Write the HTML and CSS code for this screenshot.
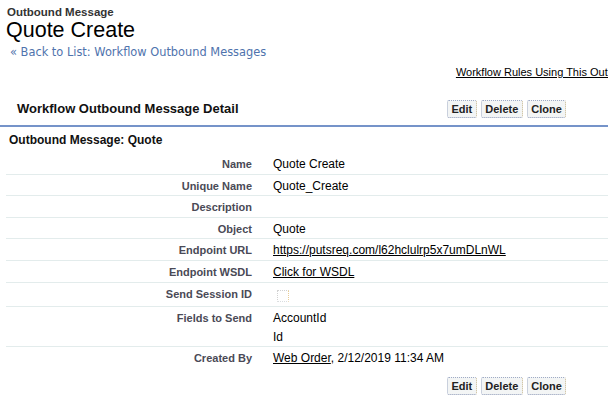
FILE: index.html
```html
<!DOCTYPE html>
<html>
<head>
<meta charset="utf-8">
<link rel="stylesheet" href="styles.css">
</head>
<body>
<div class="page">
  <div class="pt-type">Outbound Message</div>
  <h1 class="pt-title">Quote Create</h1>
  <div class="back"><a href="#">« Back to List: Workflow Outbound Messages</a></div>
  <div class="related"><a href="#">Workflow Rules Using This Outbound Message</a></div>

  <div class="pb-header">
    <h2 class="pb-title">Workflow Outbound Message Detail</h2>
    <div class="pb-buttons">
      <button class="btn">Edit</button>
      <button class="btn">Delete</button>
      <button class="btn">Clone</button>
    </div>
  </div>
  <div class="pb-rule"></div>

  <h3 class="sub-title">Outbound Message: Quote</h3>

  <div class="detail">
    <div class="row"><div class="label">Name</div><div class="value">Quote Create</div></div>
    <div class="row"><div class="label">Unique Name</div><div class="value">Quote_Create</div></div>
    <div class="row"><div class="label">Description</div><div class="value"></div></div>
    <div class="row"><div class="label">Object</div><div class="value">Quote</div></div>
    <div class="row"><div class="label">Endpoint URL</div><div class="value"><a href="#">https://putsreq.com/l62hclulrp5x7umDLnWL</a></div></div>
    <div class="row"><div class="label">Endpoint WSDL</div><div class="value"><a href="#">Click for WSDL</a></div></div>
    <div class="row row-check"><div class="label">Send Session ID</div><div class="value"><span class="checkbox"></span></div></div>
    <div class="row"><div class="label">Fields to Send</div><div class="value"><div>AccountId</div><div class="second">Id</div></div></div>
    <div class="row last"><div class="label">Created By</div><div class="value"><a href="#">Web Order</a>, 2/12/2019 11:34 AM</div></div>
  </div>

  <div class="pb-footer">
    <div class="pb-title-spacer"></div>
    <div class="pb-buttons">
      <button class="btn">Edit</button>
      <button class="btn">Delete</button>
      <button class="btn">Clone</button>
    </div>
  </div>
</div>
</body>
</html>
```

FILE: styles.css
```css
html, body {
  margin: 0;
  padding: 0;
  background: #fff;
  overflow: hidden;
}
body {
  font-family: "Liberation Sans", Arial, sans-serif;
  color: #000;
}
.page {
  width: 700px;
}
.pt-type {
  margin: 5px 0 0 7px;
  font-size: 11.5px;
  line-height: 14px;
  font-weight: bold;
  color: #333;
}
.pt-title {
  margin: 0 0 0 6px;
  font-size: 21.5px;
  line-height: 22px;
  font-weight: normal;
  color: #000;
}
.back {
  margin: 4px 0 0 10px;
  font-family: "DejaVu Sans", Verdana, sans-serif;
  font-size: 11.4px;
  line-height: 14px;
}
.back a {
  color: #4f73ad;
  text-decoration: none;
}
.related {
  margin-top: 6px;
  display: flex;
  justify-content: flex-end;
  padding-right: 14px;
  font-size: 11px;
  line-height: 14px;
}
.related a {
  color: #000;
  text-decoration: underline;
}
.pb-header, .pb-footer {
  display: flex;
  align-items: center;
  height: 18px;
}
.pb-header {
  margin-top: 21px;
}
.pb-title {
  margin: 0;
  width: 430px;
  padding-left: 17px;
  font-size: 13px;
  line-height: 16px;
  font-weight: bold;
  color: #111;
}
.pb-title-spacer {
  width: 447px;
}
.pb-buttons {
  display: flex;
  gap: 4px;
}
.btn {
  height: 18px;
  margin: 0;
  padding: 0 3.5px;
  border: 1px dotted #9fabc6;
  border-right-color: #c9b98f;
  border-bottom-color: #8e9ab8;
  border-radius: 2px;
  background: #f3f5f5;
  font-family: "Liberation Sans", Arial, sans-serif;
  font-size: 11px;
  font-weight: bold;
  color: #222;
  line-height: 16px;
}
.pb-rule {
  margin-top: 7px;
  height: 0;
  border-top: 2px solid #7593c9;
}
.sub-title {
  margin: 6px 0 0 9px;
  font-size: 12px;
  line-height: 15px;
  font-weight: bold;
  color: #111;
}
.detail {
  margin: 5px 0 0 6px;
}
.row {
  display: flex;
  padding: 4px 0 2.6px;
  border-bottom: 1px solid #e3ecec;
}
.row.last {
  border-bottom: none;
}
.row-check {
  padding-bottom: 4px;
}
.label {
  width: 246px;
  padding-right: 10px;
  text-align: right;
  font-size: 11px;
  line-height: 14px;
  font-weight: bold;
  color: #4a4a56;
}
.value {
  padding-left: 11px;
  font-size: 12px;
  line-height: 14px;
  color: #000;
  min-height: 14px;
}
.value a {
  color: #000;
  text-decoration: underline;
}
.value .second {
  margin-top: 5px;
}
.checkbox {
  display: block;
  width: 10px;
  height: 10px;
  margin: 3px 0 0 4px;
  border: 1px dotted #d2d2d2;
  border-right-color: #e9cd95;
  border-bottom-color: #d9dde0;
}
.pb-footer {
  margin-top: 9px;
}
```
